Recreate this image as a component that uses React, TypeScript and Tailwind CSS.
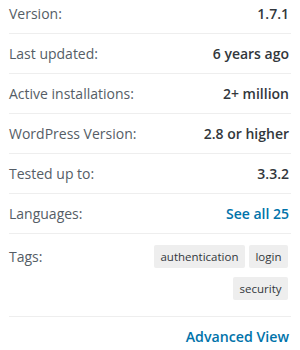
const rows: { label: string; value: string; link?: boolean }[] = [
  { label: "Version:", value: "1.7.1" },
  { label: "Last updated:", value: "6 years ago" },
  { label: "Active installations:", value: "2+ million" },
  { label: "WordPress Version:", value: "2.8 or higher" },
  { label: "Tested up to:", value: "3.3.2" },
  { label: "Languages:", value: "See all 25", link: true },
]

const tags = ["authentication", "login", "security"]

export default function App() {
  return (
    <div className="h-[350px] w-[300px] bg-white px-[9px] font-['Open_Sans',sans-serif] text-[14px] text-[#32373c]">
      {rows.map((row, i) => (
        <div
          key={row.label}
          className={`flex items-center justify-between border-b border-[#eee] leading-[19px] ${
            i === 0 ? "pt-[4px] pb-[10px]" : "py-[10px]"
          }`}
        >
          <span className="text-[#555d66]">{row.label}</span>
          {row.link ? (
            <a href="#" className="pr-[2px] font-semibold text-[#0073aa]">
              {row.value}
            </a>
          ) : (
            <span className="pr-[2px] font-semibold">{row.value}</span>
          )}
        </div>
      ))}

      <div className="flex justify-between border-b border-[#eee] pt-[11px] pb-[16px]">
        <span className="leading-[23px] text-[#555d66]">Tags:</span>
        <div className="flex w-[150px] flex-wrap justify-end gap-x-[4px] gap-y-[9px] pr-[3px]">
          {tags.map((t) => (
            <a
              key={t}
              href="#"
              className="rounded-[2px] bg-[#eee] px-[6.5px] text-[11.5px] leading-[23px] text-[#32373c]"
            >
              {t}
            </a>
          ))}
        </div>
      </div>

      <div className="flex justify-end pt-[10px] pr-[2px]">
        <a href="#" className="text-[14.2px] font-semibold leading-[20px] text-[#0073aa]">
          Advanced View
        </a>
      </div>
    </div>
  )
}
